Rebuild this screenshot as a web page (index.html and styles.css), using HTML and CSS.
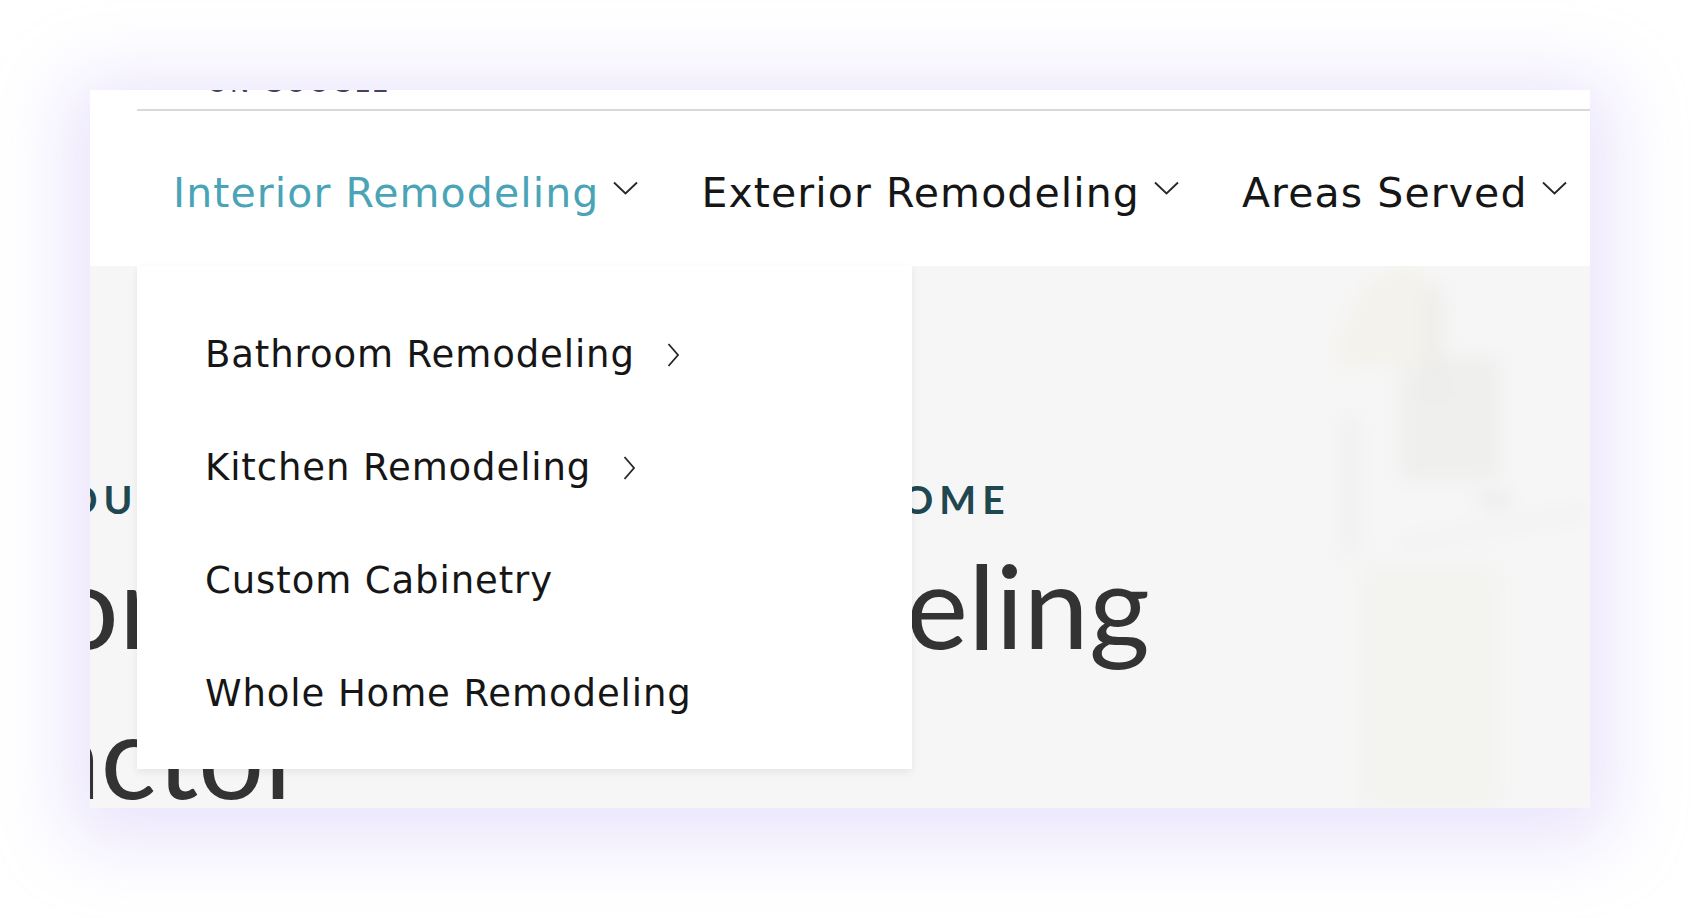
FILE: index.html
```html
<!DOCTYPE html>
<html lang="en">
<head>
    <meta charset="UTF-8">
    <meta name="viewport" content="width=device-width, initial-scale=1.0">
    <title>Interior Remodeling</title>
    <link rel="stylesheet" href="styles.css">
</head>
<body>
    <div class="frame">
        <header class="site-header">
            <div class="topbar">
                <span class="reviews">ON GOOGLE</span>
            </div>
            <nav class="main-nav">
                <ul class="menu">
                    <li class="menu-item is-active">
                        <a href="#">Interior Remodeling</a><svg class="caret" viewBox="0 0 25 14"><path d="M1 1.5 L12.5 12.5 L24 1.5"/></svg>
                        <ul class="submenu">
                            <li><a href="#">Bathroom Remodeling</a><svg class="arrow" viewBox="0 0 12 24"><path d="M1.5 1 L11 12 L1.5 23"/></svg></li>
                            <li><a href="#">Kitchen Remodeling</a><svg class="arrow" viewBox="0 0 12 24"><path d="M1.5 1 L11 12 L1.5 23"/></svg></li>
                            <li><a href="#">Custom Cabinetry</a></li>
                            <li><a href="#">Whole Home Remodeling</a></li>
                        </ul>
                    </li>
                    <li class="menu-item">
                        <a href="#">Exterior Remodeling</a><svg class="caret" viewBox="0 0 25 14"><path d="M1 1.5 L12.5 12.5 L24 1.5"/></svg>
                    </li>
                    <li class="menu-item">
                        <a href="#">Areas Served</a><svg class="caret" viewBox="0 0 25 14"><path d="M1 1.5 L12.5 12.5 L24 1.5"/></svg>
                    </li>
                </ul>
            </nav>
        </header>

        <section class="hero">
            <!-- soft kitchen photo behind the copy -->
            <svg class="hero-photo" viewBox="0 0 420 542">
                <defs>
                    <filter id="soft" x="-30%" y="-30%" width="160%" height="160%">
                        <feGaussianBlur stdDeviation="9"/>
                    </filter>
                </defs>
                <g filter="url(#soft)">
                    <rect x="190" y="300" width="140" height="242" fill="#f3f3f0"/>
                    <rect x="230" y="90" width="100" height="125" fill="#efefee"/>
                    <rect x="172" y="150" width="16" height="140" fill="#f0f0ef"/>
                    <path d="M165 100 C172 40 200 4 238 0 C260 0 270 30 270 100 Z" fill="#f4f2ec"/>
                    <rect x="258" y="20" width="14" height="110" fill="#ececeb"/>
                    <path d="M230 279 L415 246" stroke="#e9e9e9" stroke-width="4"/>
                    <rect x="310" y="229" width="30" height="10" fill="#e6e6e6"/>
                </g>
            </svg>
            <div class="hero-copy">
                <p class="eyebrow">DESIGNED FOR YOU, BUILT TO LAST IN YOUR HOME</p>
                <h1><span>Superior Home Remodeling</span><span class="second-line">Contractor</span></h1>
            </div>
        </section>
    </div>
</body>
</html>
```

FILE: styles.css
```css
body {
    margin: 0;
    padding: 90px 0 110px 90px;
    background-color: #fff;
    font-family: "DejaVu Sans", sans-serif;
}
.frame {
    display: flex;
    flex-direction: column;
    position: relative;
    width: 1500px;
    height: 718px;
    background-color: #fff;
    overflow: hidden;
    box-shadow: 0 12px 70px 22px rgba(190, 172, 245, 0.32);
}

/* header */
.topbar {
    display: flex;
    align-items: flex-end;
    height: 19px;
    padding-left: 117px;
}
.reviews {
    margin-bottom: 13px;
    font-size: 26px;
    line-height: 26px;
    letter-spacing: 2.6px;
    color: #45435f;
    white-space: nowrap;
}
.main-nav {
    margin-left: 47px;
    border-top: 2px solid #d9d9d9;
    position: relative;
    z-index: 2;
}
.menu {
    display: flex;
    list-style: none;
    margin: 0;
    padding: 0;
}
.menu-item {
    position: relative;
    padding: 58px 27px 49px 36px;
    font-size: 41px;
    line-height: 48px;
    white-space: nowrap;
}
.menu-item > a {
    color: #161616;
    text-decoration: none;
    letter-spacing: 1.1px;
}
.menu-item.is-active > a {
    color: #4aa4b7;
}
.caret {
    width: 25px;
    height: 14px;
    margin-left: 14px;
    vertical-align: 12px;
}
.caret path,
.arrow path {
    fill: none;
    stroke: #262626;
    stroke-width: 1.8;
}

/* dropdown */
.submenu {
    position: absolute;
    top: 100%;
    left: 0;
    width: 775px;
    margin: 0;
    padding: 32px 0 19px;
    list-style: none;
    background-color: #fff;
    box-shadow: 0 3px 8px rgba(0, 0, 0, 0.07);
}
.submenu li {
    padding: 34px 68px;
    font-size: 37px;
    line-height: 45px;
}
.submenu a {
    color: #161616;
    text-decoration: none;
    letter-spacing: 0.9px;
}
.arrow {
    width: 12px;
    height: 24px;
    margin-left: 32px;
}

/* hero */
.hero {
    flex: 1;
    position: relative;
    background-color: #f6f6f6;
}
.hero-photo {
    position: absolute;
    top: 0;
    right: 0;
    width: 420px;
    height: 542px;
}
.hero-copy {
    position: relative;
    padding-top: 210px;
    margin-left: -363px;
}
.eyebrow {
    margin: 0 0 0 -100px;
    font-family: Lato, sans-serif;
    font-weight: 700;
    font-size: 39px;
    line-height: 1.2;
    letter-spacing: 6px;
    word-spacing: 20px;
    color: #1e4750;
    white-space: nowrap;
}
.hero-copy h1 {
    margin: 6px 0 0;
    font-family: Lato, sans-serif;
    font-weight: 400;
    font-size: 117px;
    line-height: 150px;
    word-spacing: 8px;
    color: #333;
    white-space: nowrap;
}
.hero-copy h1 span {
    display: block;
}
.hero-copy h1 .second-line {
    padding-left: 24px;
}
```
